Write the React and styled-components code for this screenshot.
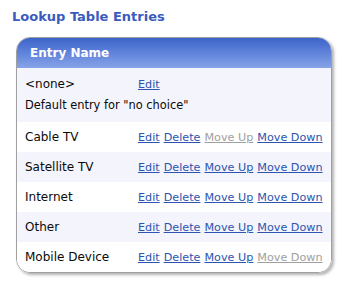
import React from "react"
import styled, { createGlobalStyle } from "styled-components"

const GlobalStyle = createGlobalStyle`
  body {
    margin: 0;
    background: #fff;
    font-family: "DejaVu Sans", Verdana, sans-serif;
  }
`

const Page = styled.div`
  padding: 10px 0 0 12px;
  width: 350px;
  height: 285px;
  box-sizing: border-box;
`

const Title = styled.h2`
  margin: 0 0 13px 0;
  font-size: 13px;
  font-weight: bold;
  color: #3a5bbd;
  line-height: 14px;
`

const Card = styled.div`
  margin-left: 4px;
  width: 316px;
  border: 1px solid #a0a0a0;
  border-radius: 14px;
  overflow: hidden;
  box-shadow: 2px 2px 3px rgba(0, 0, 0, 0.3);
  box-sizing: border-box;
`

const Header = styled.div`
  height: 30px;
  display: flex;
  align-items: center;
  padding-left: 13px;
  background: linear-gradient(to bottom, #3c63c9 0%, #6487dc 55%, #88a4e8 100%);
  color: #fff;
  font-size: 12px;
  font-weight: bold;
`

const Row = styled.div`
  display: flex;
  flex-direction: column;
  justify-content: ${({ tall }) => (tall ? "flex-start" : "center")};
  height: ${({ tall }) => (tall ? "54px" : "30px")};
  padding: ${({ tall }) => (tall ? "7px 0 0 8px" : "0 0 0 8px")};
  box-sizing: border-box;
  background: ${({ tinted }) => (tinted ? "#f4f4fc" : "#fff")};
  font-size: 12px;
  color: #0a0a0a;
`

const Line = styled.div`
  display: flex;
  align-items: center;
  height: 18px;
  white-space: nowrap;
`

const Name = styled.span`
  flex: 0 0 113px;
`

const Actions = styled.span`
  display: flex;
  gap: 4px;
  font-size: 11.2px;
  white-space: nowrap;
`

const Action = styled.a`
  color: ${({ disabled }) => (disabled ? "#a0a0a0" : "#2c54b0")};
  text-decoration: underline;
  cursor: ${({ disabled }) => (disabled ? "default" : "pointer")};
`

const Note = styled.div`
  font-size: 11.4px;
  line-height: 14px;
  margin-top: 5px;
`

const entries = ["Cable TV", "Satellite TV", "Internet", "Other", "Mobile Device"]

const App = () => (
  <>
    <GlobalStyle />
    <Page>
      <Title>Lookup Table Entries</Title>
      <Card>
        <Header>Entry Name</Header>
        <Row tinted tall>
          <Line>
            <Name>&lt;none&gt;</Name>
            <Actions>
              <Action>Edit</Action>
            </Actions>
          </Line>
          <Note>Default entry for "no choice"</Note>
        </Row>
        {entries.map((name, i) => (
          <Row key={name} tinted={i % 2 === 1}>
            <Line>
              <Name>{name}</Name>
              <Actions>
                <Action>Edit</Action>
                <Action>Delete</Action>
                <Action disabled={i === 0}>Move Up</Action>
                <Action disabled={i === entries.length - 1}>Move Down</Action>
              </Actions>
            </Line>
          </Row>
        ))}
      </Card>
    </Page>
  </>
)

export default App
